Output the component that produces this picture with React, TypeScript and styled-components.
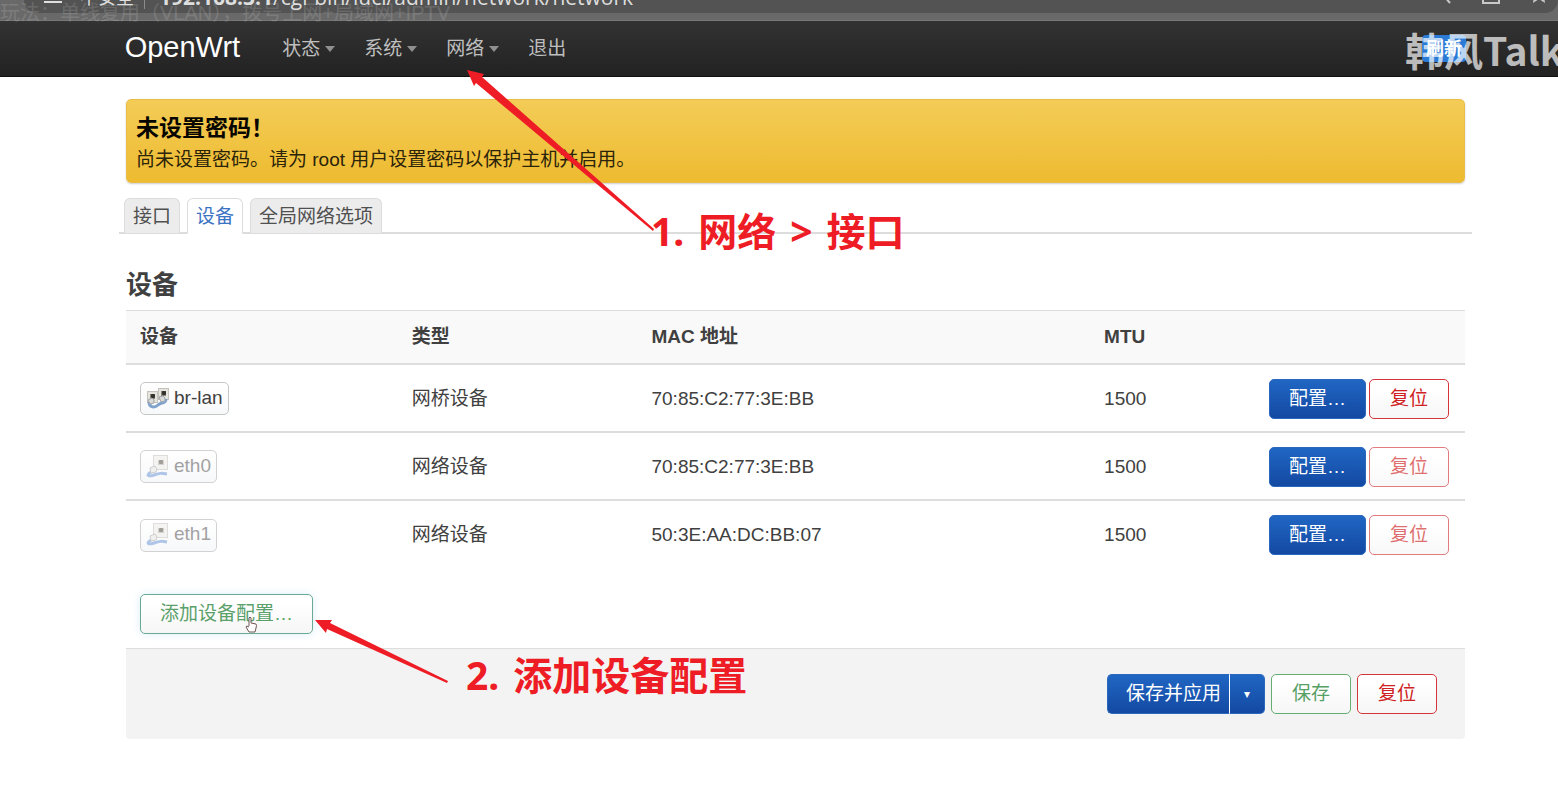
import React from "react";
import styled, { createGlobalStyle, css } from "styled-components";

const Global = createGlobalStyle`
  * { box-sizing: border-box; }
  body {
    margin: 0;
    background: #fff;
    color: #404040;
    font: 19px/28px "Liberation Sans", "Noto Sans CJK SC", sans-serif;
    overflow-x: hidden;
  }
  button, a { font: inherit; }
`;

const Page = styled.div`
  position: relative;
  overflow: hidden;
`;

const BrowserStrip = styled.header`
  position: relative;
  height: 21px;
  background: #696969;
  border-bottom: 1px solid #777;
`;

const AddressBar = styled.div`
  display: flex;
  align-items: flex-end;
  justify-content: space-between;
  height: 13px;
  margin-left: 24px;
  padding: 0 10px 0 20px;
  background: #535353;
  border-radius: 0 0 20px 20px;
  color: #dedede;
  white-space: pre;
`;

const Address = styled.div`
  display: flex;
  align-items: flex-end;
  height: 24px;
  margin-bottom: 4px;
  font: 21px/24px "Open Sans", "Noto Sans CJK SC", sans-serif;
`;

const Security = styled.span`
  margin: 0 14px 0 18px;
  padding-right: 10px;
  border-right: 1px solid #8c8c8c;
  font-size: 18px;
`;

const BarIcons = styled.div`
  display: flex;
  align-items: flex-end;
  gap: 30px;
`;

const VideoTitle = styled.div`
  position: absolute;
  left: 0;
  top: 3px;
  color: #ffffff;
  opacity: 0.13;
  font-size: 20px;
  line-height: 20px;
  white-space: nowrap;
`;

const Navbar = styled.nav`
  display: flex;
  align-items: center;
  height: 56px;
  padding: 0 8% 4px;
  background: linear-gradient(#333, #222);
  border-bottom: 1px solid #111;
`;

const Brand = styled.a`
  margin-right: 42px;
  color: #fff;
  font-size: 29px;
  text-decoration: none;
`;

const Menu = styled.ul`
  display: flex;
  gap: 29px;
  margin: 0;
  padding: 4px 0 0;
  list-style: none;
`;

const MenuLink = styled.a<{ $caret?: boolean }>`
  display: flex;
  align-items: center;
  gap: 5px;
  color: #bfbfbf;
  text-decoration: none;
  ${(p) =>
    p.$caret &&
    css`
      &::after {
        content: "";
        border: 5px solid transparent;
        border-top: 6px solid #8f8f8f;
        border-bottom: 0;
      }
    `}
`;

const Refresh = styled.button`
  position: absolute;
  top: 35px;
  right: 92px;
  width: 44px;
  height: 27px;
  padding: 0;
  border: 0;
  border-radius: 4px;
  background: #2b7bd6;
  color: #fff;
  font-size: 18px;
  font-weight: bold;
  line-height: 28px;
`;

const Watermark = styled.div`
  position: absolute;
  top: 23px;
  left: calc(100% - 153px);
  color: rgba(255, 255, 255, 0.7);
  font: 700 39px/52px "Noto Sans CJK SC", sans-serif;
  white-space: nowrap;
  pointer-events: none;
`;

const Content = styled.main`
  margin: 22px 93px 0 126px;
`;

const Warning = styled.section`
  height: 84px;
  padding: 14px 9px;
  color: #2b230a;
  background: linear-gradient(#f3cc57, #eebb30);
  border: 1px solid #e9bd48;
  border-radius: 5px;
  box-shadow: 0 1px 2px rgba(0, 0, 0, 0.2);
`;

const WarningTitle = styled.h4`
  margin: 0 0 4px;
  color: #080600;
  font-size: 23px;
  line-height: 28px;
`;

const WarningText = styled.p`
  margin: 0;
`;

const Tabs = styled.div`
  display: flex;
  gap: 7px;
  height: 36px;
  margin: 15px -7px 0 -7px;
  padding-left: 5px;
  border-bottom: 2px solid #ddd;
`;

const Tab = styled.a<{ $active?: boolean }>`
  height: 36px;
  padding: 0 8px;
  line-height: 36px;
  color: ${(p) => (p.$active ? "#3b73c4" : "#505050")};
  background: ${(p) => (p.$active ? "#fff" : "#ececec")};
  border: 1px solid #dcdcdc;
  border-bottom-color: ${(p) => (p.$active ? "#fff" : "#ddd")};
  border-radius: 6px 6px 0 0;
  text-decoration: none;
`;

const Heading = styled.h3`
  margin: 34px 0 8px;
  font-size: 26px;
  line-height: 34px;
`;

const Table = styled.table`
  width: 100%;
  table-layout: fixed;
  border-collapse: collapse;
  border-top: 1px solid #ddd;
`;

const HeadCell = styled.th<{ $w: string }>`
  width: ${(p) => p.$w};
  height: 53px;
  padding: 0 14px;
  background: #f9f9f9;
  text-align: left;
`;

const Row = styled.tr`
  height: 68px;
  border-top: 2px solid #ddd;
`;

const Cell = styled.td`
  padding: 2px 14px 0;
`;

const Actions = styled.div`
  display: flex;
  justify-content: flex-end;
  gap: 3px;
  margin-right: 2px;
`;

const DeviceBadge = styled.span<{ $off?: boolean }>`
  display: inline-flex;
  align-items: center;
  gap: 4px;
  height: 33px;
  padding: 0 5px 2px 5px;
  vertical-align: middle;
  color: ${(p) => (p.$off ? "#a2a2a2" : "#404040")};
  background: linear-gradient(#fff, #f7f8fa);
  border: 1px solid ${(p) => (p.$off ? "#d2d2d2" : "#c6c6c6")};
  border-radius: 5px;
`;

const tones = {
  blue: ["#fff", "#2a68bd"],
  green: ["#57a065", "#64ae74"],
  teal: ["#5aa06a", "#69aa95"],
  red: ["#cf2222", "#d4353a"],
};

const Button = styled.button<{ $tone: keyof typeof tones; $faded?: boolean }>`
  min-width: 80px;
  height: 40px;
  padding: 0 19px;
  color: ${(p) => tones[p.$tone][0]};
  background: ${(p) =>
    p.$tone === "blue" ? "linear-gradient(#2066c3, #1349a2)" : "linear-gradient(#fff 25%, #f6f6f6)"};
  border: 1px solid ${(p) => tones[p.$tone][1]};
  border-radius: 5px;
  opacity: ${(p) => (p.$faded ? 0.65 : 1)};
  box-shadow: ${(p) => (p.$tone === "teal" ? "0 0 9px rgba(80, 170, 220, 0.2)" : "none")};
  white-space: nowrap;
`;

const AddBar = styled.div`
  display: flex;
  align-items: flex-start;
  height: 80px;
  padding: 26px 14px 0;
`;

const Footer = styled.footer`
  display: flex;
  align-items: center;
  justify-content: flex-end;
  gap: 6px;
  height: 91px;
  padding: 0 28px;
  background: #f3f3f3;
  border-top: 1px solid #ddd;
  border-radius: 0 0 4px 4px;
`;

const Split = styled.div`
  display: flex;
`;

const SplitMain = styled(Button)`
  padding: 0 8px 0 18px;
  border-right: 0;
  border-radius: 5px 0 0 5px;
`;

const SplitToggle = styled(Button)`
  min-width: 36px;
  padding: 0;
  border-left: 1px solid #fff;
  border-radius: 0 5px 5px 0;
  font-size: 12px;
`;

const Arrows = styled.svg`
  position: absolute;
  left: 0;
  top: 0;
  pointer-events: none;
`;

const Note = styled.div<{ $x: number; $y: number }>`
  position: absolute;
  left: ${(p) => p.$x}px;
  top: ${(p) => p.$y}px;
  display: flex;
  gap: 14px;
  color: #ee1c25;
  font: 700 39px/50px "Noto Sans", "Noto Sans CJK SC", sans-serif;
  white-space: nowrap;
  pointer-events: none;
`;

const Hand = styled.svg`
  position: absolute;
  left: 244px;
  top: 615px;
  pointer-events: none;
`;

const Socket = ({ x, y }: { x: number; y: number }) => (
  <g transform={`translate(${x} ${y})`}>
    <rect x="0.5" y="0.5" width="10" height="11" fill="#e6e4de" stroke="#c4c2bb" />
    <path d="M3 8V3h5v5z" fill="#8a867e" />
    <rect x="4" y="3" width="4" height="4" rx="1" fill="#35312b" />
  </g>
);

const BridgeIcon = () => (
  <svg width="24" height="22" viewBox="0 0 24 22" aria-hidden="true">
    <Socket x={1} y={4} />
    <Socket x={12} y={1} />
    <path d="M3 15c0 6 6 6 9 3s8-1 8-6" fill="none" stroke="#7fa3cd" strokeWidth="3" />
    <path d="M2 13l4-2 2 2v3l-4 1zM13 10l4-1 2 2v3l-4 1z" fill="#d9dad8" stroke="#a2a6a8" />
  </svg>
);

const PortIcon = () => (
  <svg width="24" height="24" viewBox="0 0 24 24" opacity="0.7" aria-hidden="true">
    <rect x="7.500" y="1.500" width="14" height="14" fill="#f1f0ed" stroke="#d2d0ca" />
    <path d="M12 11V6h6v5z" fill="#c5c2bb" />
    <rect x="13" y="6" width="4" height="4" rx="1" fill="#7b7770" />
    <path d="M5 18c-5 3-3 5 3 3s7-2 13-1" fill="none" stroke="#8fb0df" strokeWidth="3" />
    <path d="M4 14l5-2 2 3-1 3-5 1z" fill="#ececea" stroke="#babbb9" />
  </svg>
);

const devices = [
  { name: "br-lan", type: "网桥设备", mac: "70:85:C2:77:3E:BB", mtu: 1500, off: false },
  { name: "eth0", type: "网络设备", mac: "70:85:C2:77:3E:BB", mtu: 1500, off: true },
  { name: "eth1", type: "网络设备", mac: "50:3E:AA:DC:BB:07", mtu: 1500, off: true },
];

export default function App() {
  return (
    <Page>
      <Global />
      <BrowserStrip>
        <AddressBar>
          <Address>
            <svg width="18" height="10" viewBox="0 0 18 10" aria-hidden="true">
              <path d="M0 2H18V4H0z" fill="#dedede" />
            </svg>
            <Security>不安全</Security>
            <b>192.168.3.1</b>/cgi-bin/luci/admin/network/network
          </Address>
          <BarIcons>
            <svg width="14" height="13" viewBox="0 0 14 13" aria-hidden="true">
              <path d="M6-4L12 3" stroke="#c8c8c8" strokeWidth="2" />
            </svg>
            <svg width="18" height="13" viewBox="0 0 18 13" aria-hidden="true">
              <path d="M1-4V3H17V-4" fill="none" stroke="#c8c8c8" strokeWidth="2" />
            </svg>
            <svg width="18" height="13" viewBox="0 0 18 13" aria-hidden="true">
              <path d="M4-4L3 3L9-1L15 3L14-4z" fill="#c8c8c8" />
            </svg>
          </BarIcons>
        </AddressBar>
        <VideoTitle>玩法：单线复用（VLAN），拨号上网+局域网+IPTV</VideoTitle>
      </BrowserStrip>
      <Navbar>
        <Brand href="#">OpenWrt</Brand>
        <Menu>
          <li><MenuLink href="#" $caret>状态</MenuLink></li>
          <li><MenuLink href="#" $caret>系统</MenuLink></li>
          <li><MenuLink href="#" $caret>网络</MenuLink></li>
          <li><MenuLink href="#">退出</MenuLink></li>
        </Menu>
      </Navbar>
      <Refresh type="button">刷新</Refresh>
      <Watermark>韩风Talk</Watermark>

      <Content>
        <Warning>
          <WarningTitle>未设置密码！</WarningTitle>
          <WarningText>尚未设置密码。请为 root 用户设置密码以保护主机并启用。</WarningText>
        </Warning>
        <Tabs>
          <Tab href="#">接口</Tab>
          <Tab href="#" $active>设备</Tab>
          <Tab href="#">全局网络选项</Tab>
        </Tabs>
        <Heading>设备</Heading>
        <Table>
          <thead>
            <tr>
              <HeadCell $w="20.3%">设备</HeadCell>
              <HeadCell $w="17.9%">类型</HeadCell>
              <HeadCell $w="33.8%">MAC 地址</HeadCell>
              <HeadCell $w="11%">MTU</HeadCell>
              <HeadCell $w="17%" aria-label="操作" />
            </tr>
          </thead>
          <tbody>
            {devices.map((d) => (
              <Row key={d.name}>
                <Cell>
                  <DeviceBadge $off={d.off}>
                    {d.off ? <PortIcon /> : <BridgeIcon />}
                    {d.name}
                  </DeviceBadge>
                </Cell>
                <Cell>{d.type}</Cell>
                <Cell>{d.mac}</Cell>
                <Cell>{d.mtu}</Cell>
                <Cell>
                  <Actions>
                    <Button type="button" $tone="blue">配置…</Button>
                    <Button type="button" $tone="red" $faded={d.off}>复位</Button>
                  </Actions>
                </Cell>
              </Row>
            ))}
          </tbody>
        </Table>
        <AddBar>
          <Button type="button" $tone="teal">添加设备配置…</Button>
        </AddBar>
        <Footer>
          <Split>
            <SplitMain type="button" $tone="blue">保存并应用</SplitMain>
            <SplitToggle type="button" $tone="blue" aria-label="更多">▾</SplitToggle>
          </Split>
          <Button type="button" $tone="green">保存</Button>
          <Button type="button" $tone="red">复位</Button>
        </Footer>
      </Content>

      <Hand width="14" height="18" viewBox="0 0 14 18" aria-hidden="true">
        <path
          d="M5 11V3q1-2 2 0v5l5 1q1 1 0 4l-1 4H5L2 12q0-2 3 0"
          fill="#fff"
          stroke="#6d5555"
        />
      </Hand>
      <Arrows width="920" height="700" viewBox="0 0 920 700" aria-hidden="true">
        <path d="M467 70L484 74L482 77L654 229L653 231L476 83L474 86z" fill="#ee1c25" />
        <path d="M315 620L332 620L330 623L448 681L447 683L327 629L326 633z" fill="#ee1c25" />
      </Arrows>
      <Note $x={651} $y={206}>
        <span>1.</span>
        <span>网络</span>
        <span>&gt;</span>
        <span>接口</span>
      </Note>
      <Note $x={466} $y={650}>
        <span>2.</span>
        <span>添加设备配置</span>
      </Note>
    </Page>
  );
}
